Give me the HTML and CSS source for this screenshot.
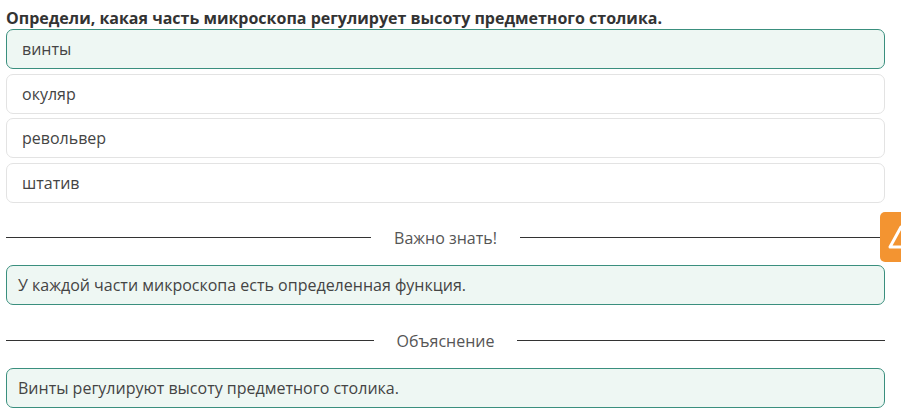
FILE: index.html
```html
<!DOCTYPE html>
<html lang="ru">
<head>
    <meta charset="UTF-8">
    <title>Вопрос</title>
    <link rel="stylesheet" href="styles.css">
</head>
<body>
    <div class="task">
        <h2 class="question">Определи, какая часть микроскопа регулирует высоту предметного столика.</h2>
        <div class="options">
            <div class="option selected">винты</div>
            <div class="option">окуляр</div>
            <div class="option">револьвер</div>
            <div class="option">штатив</div>
        </div>
        <div class="divider"><span>Важно знать!</span></div>
        <div class="note">У каждой части микроскопа есть определенная функция.</div>
        <div class="divider"><span>Объяснение</span></div>
        <div class="note">Винты регулируют высоту предметного столика.</div>
    </div>
    <div class="badge">
        <svg width="30" height="30" viewBox="0 0 30 30"><path d="M15 5 L26 25 L4 25 Z" fill="none" stroke="#fff" stroke-width="3" stroke-linejoin="round"/></svg>
    </div>
</body>
</html>
```

FILE: styles.css
```css
body { margin: 0; font-family: "Open Sans", Arial, sans-serif; color: #444; background: #fff; }
.task { width: 879px; margin-left: 6px; }
.question { font-size: 16px; font-weight: bold; color: #333; margin: 0; padding-top: 8px; line-height: 20px; height: 21px; }
.options { display: flex; flex-direction: column; gap: 4.5px; }
.option { height: 38px; line-height: 38px; padding: 0 15px; border: 1px solid #e3e3e3; border-radius: 7px; font-size: 16px; color: #444; }
.option.selected { background: #eef7f3; border-color: #3a8f7e; }
.divider { display: flex; align-items: center; height: 26px; margin: 22px 0 14px; color: #555; font-size: 16px; }
.note + .divider { margin-top: 23px; }
.divider::before, .divider::after { content: ""; flex: 1; border-top: 1px solid #333; }
.divider span { padding: 0 23px; }
.note { height: 38px; line-height: 38px; padding: 0 11px; border: 1px solid #3a8f7e; border-radius: 7px; background: #eef7f3; font-size: 16px; color: #444; }
.badge { position: absolute; left: 880px; top: 212px; width: 40px; height: 50px; background: #f39431; border-radius: 5px; display: flex; align-items: center; padding-left: 6px; box-sizing: border-box; }
```
